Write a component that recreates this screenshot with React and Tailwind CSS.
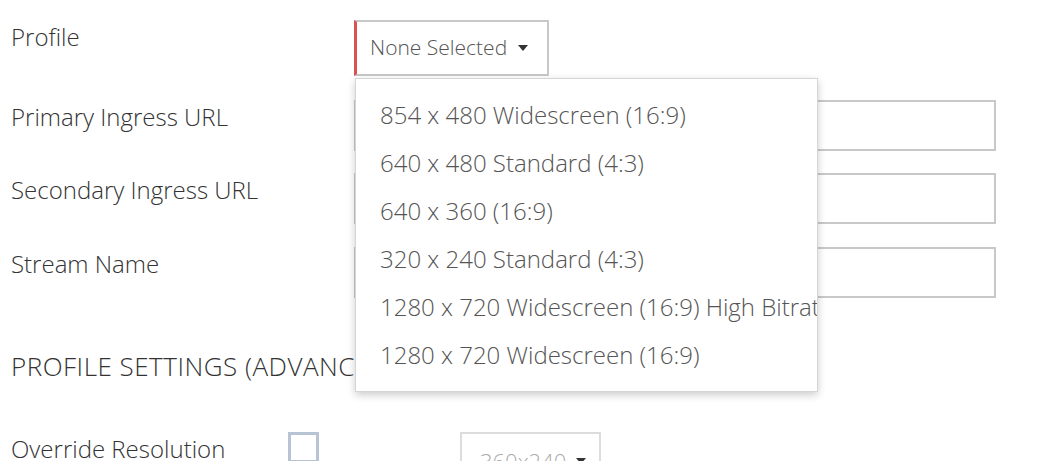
const options = [
  "854 x 480 Widescreen (16:9)",
  "640 x 480 Standard (4:3)",
  "640 x 360 (16:9)",
  "320 x 240 Standard (4:3)",
  "1280 x 720 Widescreen (16:9) High Bitrate",
  "1280 x 720 Widescreen (16:9)",
];

const Caret = ({ className }) => (
  <svg viewBox="0 0 10 6" className={className}>
    <path d="M0 0h10L5 6z" fill="currentColor" />
  </svg>
);

const Row = ({ label, children, className = "" }) => (
  <div className={`flex ${className}`}>
    <div className="w-[343px] shrink-0 pt-px text-[24px] font-light leading-[32px] text-[#333]">{label}</div>
    {children}
  </div>
);

export default function App() {
  return (
    <div className="min-h-screen bg-white pl-[11px] pt-[20px] font-['Open_Sans',sans-serif]">
      <Row label="Profile">
        <div className="relative">
          <button className="flex h-[56px] items-center gap-[11px] border-2 border-l-[3px] border-[#c8c8c8] border-l-[#d9534f] bg-white pl-[13px] pr-[19px] text-[21px] font-light text-[#555]">
            None Selected
            <Caret className="h-[6px] w-[10px] text-[#333]" />
          </button>
          <ul className="absolute left-px top-full z-10 mt-[2px] w-[463px] overflow-hidden whitespace-nowrap border border-[#d5d5d5] bg-white py-[12px] shadow-[0_3px_8px_rgba(0,0,0,0.2)]">
            {options.map((o) => (
              <li key={o} className="h-[48px] pl-[24px] text-[24px] font-light leading-[48px] text-[#555]">
                {o}
              </li>
            ))}
          </ul>
        </div>
      </Row>

      <Row label="Primary Ingress URL" className="mt-[24px]">
        <input className="h-[51px] w-[642px] border-2 border-[#c8c8c8] bg-white" />
      </Row>
      <Row label="Secondary Ingress URL" className="mt-[22px]">
        <input className="h-[51px] w-[642px] border-2 border-[#c8c8c8] bg-white" />
      </Row>
      <Row label="Stream Name" className="mt-[23px]">
        <input className="h-[51px] w-[642px] border-2 border-[#c8c8c8] bg-white" />
      </Row>

      <h2 className="mt-[52px] text-[26px] font-light leading-[32px] tracking-[0.5px] text-[#333]">PROFILE SETTINGS (ADVANCED)</h2>

      <div className="mt-[50px] flex items-start">
        <div className="w-[277px] shrink-0 pt-px text-[24px] font-light leading-[32px] text-[#333]">Override Resolution</div>
        <div className="h-[31px] w-[31px] border-[3px] border-[#b8c4d4] bg-white" />
        <div className="ml-[141px] flex h-[58px] w-[141px] items-center gap-[10px] border-2 border-[#dcdcdc] pl-[18px] text-[22px] font-light text-[#aaa]">
          360x240
          <Caret className="h-[6px] w-[10px] text-[#333]" />
        </div>
      </div>
    </div>
  );
}
